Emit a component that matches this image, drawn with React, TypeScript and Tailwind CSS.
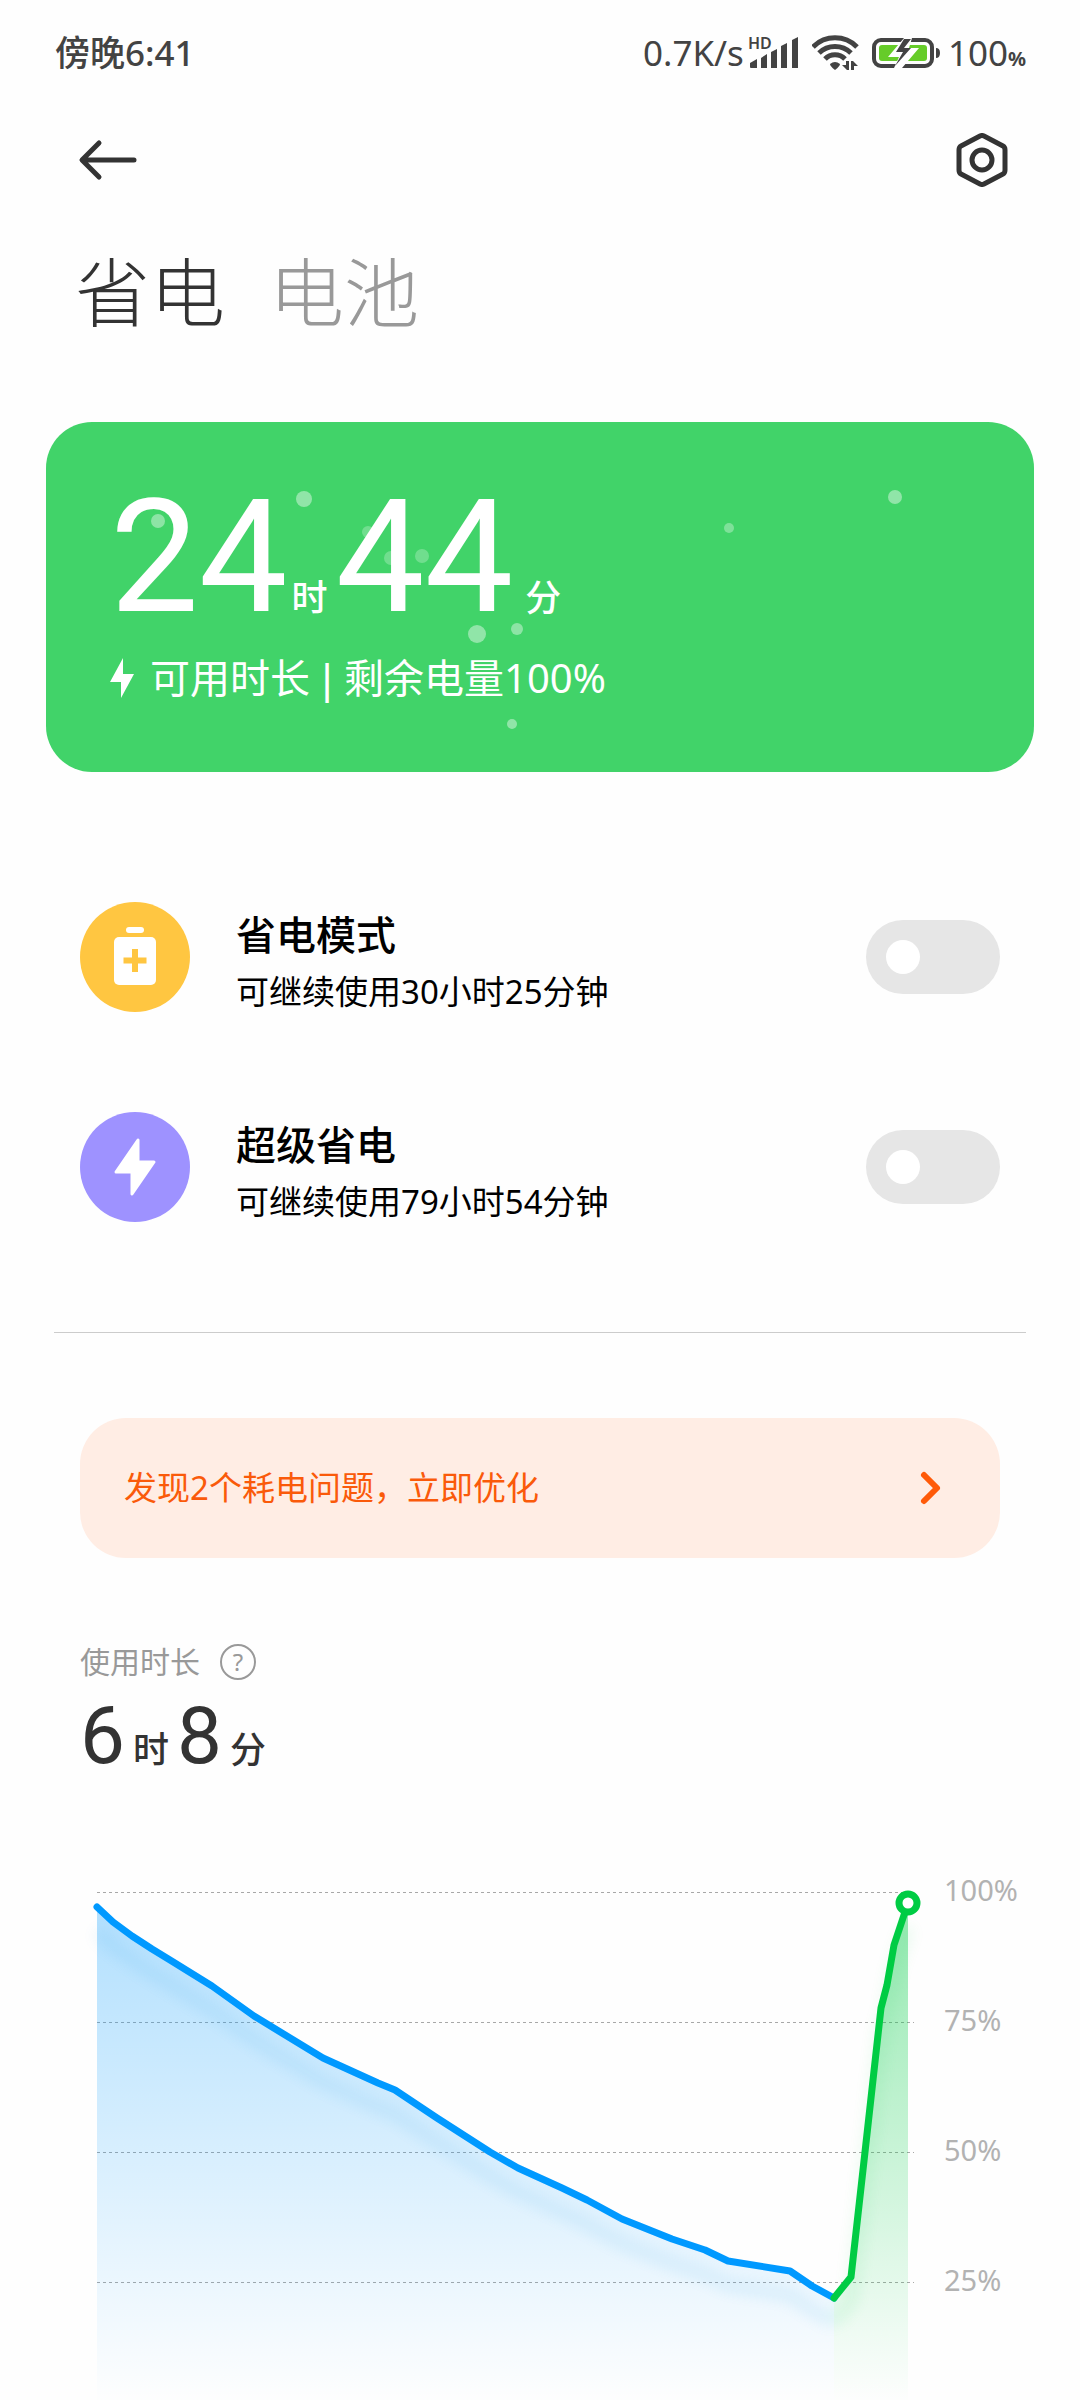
import { useState, type ReactNode } from "react";

type Point = [number, number];

const drain: Point[] = [
  [97, 47], [113, 62], [132, 76], [152, 89], [170, 100], [212, 126], [254, 156],
  [323, 198], [378, 223], [395, 230], [437, 258], [490, 292], [518, 308],
  [562, 328], [587, 340], [622, 359], [672, 379], [705, 390], [728, 401],
  [790, 411], [812, 426], [834, 438],
];

const charge: Point[] = [
  [834, 438], [851, 417], [865, 292], [881, 148], [887, 125], [894, 85], [908, 43],
];

const gridLines = [
  { y: 32, label: "100%" },
  { y: 162, label: "75%" },
  { y: 292, label: "50%" },
  { y: 422, label: "25%" },
  { y: 552, label: "0%" },
];

const bubbles = [
  { cx: 258, cy: 77, r: 8, o: 0.42 },
  { cx: 112, cy: 99, r: 7, o: 0.4 },
  { cx: 322, cy: 110, r: 6, o: 0.25 },
  { cx: 345, cy: 136, r: 7, o: 0.25 },
  { cx: 376, cy: 134, r: 7, o: 0.25 },
  { cx: 431, cy: 212, r: 9, o: 0.42 },
  { cx: 471, cy: 207, r: 6, o: 0.4 },
  { cx: 466, cy: 302, r: 5, o: 0.42 },
  { cx: 683, cy: 106, r: 5, o: 0.32 },
  { cx: 849, cy: 75, r: 7, o: 0.42 },
];

const toPath = (points: Point[]) => "M" + points.map((p) => p.join(" ")).join("L");

const toArea = (points: Point[]) =>
  `${toPath(points)}V552H${points[0][0]}Z`;

function StatusBar() {
  return (
    <header className="flex h-[106px] items-center justify-between pr-[54px] pl-[55px] text-[35px] text-[#434343]">
      <span className="font-medium">傍晚6:41</span>
      <div className="flex items-center">
        <span>0.7K/s</span>
        <svg viewBox="0 0 52 44" className="ml-1 h-11 w-[52px]" fill="currentColor" aria-label="HD 信号">
          <text x="0" y="18" fontSize="16" fontWeight="600">HD</text>
          <path d="M2 36v-4l7-4v9H3a1 1 0 0 1-1-1ZM13 27l6-4v14h-6ZM23 21l6-3v19h-6ZM33 15l6-3v25h-6ZM44 9l6-3v31h-6Z" />
        </svg>
        <svg viewBox="0 0 48 36" className="ml-3 h-9 w-12" aria-label="无线网络">
          <g fill="none" stroke="currentColor" strokeWidth="5">
            <path d="M1 12a31 31 0 0 1 44 0" />
            <path d="M7 18a23 23 0 0 1 32 0" />
            <path d="M13 24a14 14 0 0 1 20 0" />
          </g>
          <path d="M18 29a8 8 0 0 1 10 0q0 2-5 6-5-4-5-6Z" fill="currentColor" />
          <path d="M34 26h3v9h-2l-5-5h4ZM42 35h-3v-9h2l5 5h-4Z" fill="currentColor" />
        </svg>
        <svg viewBox="0 0 68 30" className="ml-3 h-[30px] w-[68px]" aria-label="正在充电">
          <rect x="2" y="2" width="58" height="26" rx="7" fill="none" stroke="currentColor" strokeWidth="4" />
          <rect x="7" y="7" width="48" height="16" rx="3" fill="#66cc29" />
          <path d="M64 10q4 0 4 5t-4 5Z" fill="currentColor" />
          <path d="M32 0 16 19h11l-5 11h8l17-20H37l3-10Z" fill="#fff" />
          <path d="m32 1-8 13h7l-8 14 16-18h-7l7-9Z" fill="currentColor" />
        </svg>
        <span className="ml-2">
          100<span className="text-[20px] font-bold">%</span>
        </span>
      </div>
    </header>
  );
}

function TopBar() {
  return (
    <div className="flex h-[108px] items-center justify-between px-[71px]">
      <button type="button" aria-label="返回">
        <svg viewBox="0 0 72 48" className="h-12 w-[72px]" fill="none" stroke="#333" strokeWidth="5" strokeLinecap="round" strokeLinejoin="round">
          <path d="M63 24H12M28 7 11 24l17 17" />
        </svg>
      </button>
      <button type="button" aria-label="设置">
        <svg viewBox="0 0 54 54" className="h-[54px] w-[54px]" fill="none" stroke="#333" strokeWidth="5" strokeLinejoin="round">
          <path d="M25 3q2-1 4 0l19 10q2 1 2 4v20q0 3-2 4L29 51q-2 1-4 0L6 41q-2-1-2-4V17q0-3 2-4Z" />
          <circle cx="27" cy="27" r="10" />
        </svg>
      </button>
    </div>
  );
}

function SummaryCard() {
  return (
    <section className="relative mx-[46px] mt-[70px] overflow-hidden rounded-[46px] bg-[#41d369] pt-[60px] pb-[64px] pl-[64px] text-white">
      <svg viewBox="0 0 988 350" className="absolute inset-0 h-full w-full" aria-hidden="true">
        {bubbles.map((b) => (
          <circle key={`${b.cx}-${b.cy}`} cx={b.cx} cy={b.cy} r={b.r} fill="#fff" opacity={b.o} />
        ))}
      </svg>
      <div className="relative flex items-baseline text-[36px] leading-none font-medium">
        <span className="font-['Roboto',sans-serif] text-[158px] leading-[150px] font-normal">24</span>
        <span className="mr-2 ml-1">时</span>
        <span className="font-['Roboto',sans-serif] text-[158px] leading-[150px] font-normal">44</span>
        <span className="ml-3">分</span>
      </div>
      <div className="relative mt-4 flex items-center text-[40px] leading-[60px]">
        <svg viewBox="0 0 24 40" className="mr-4 h-10 w-6" fill="#fff" aria-hidden="true">
          <path d="M13 0v16h11L11 40V24H0Z" />
        </svg>
        <p className="flex gap-1.5">
          <span>可用时长</span>
          <span className="font-medium">|</span>
          <span>剩余电量100%</span>
        </p>
      </div>
    </section>
  );
}

function ModeRow({
  id,
  icon,
  title,
  detail,
}: {
  id: string;
  icon: ReactNode;
  title: string;
  detail: string;
}) {
  const [on, setOn] = useState(false);
  return (
    <div className="flex h-[210px] items-center px-20">
      {icon}
      <label htmlFor={id} className="ml-[46px] flex-1 pt-2 text-black">
        <span className="block text-[40px] leading-[60px] font-medium">{title}</span>
        <span className="mt-0.5 block text-[33px] leading-[50px]">{detail}</span>
      </label>
      <input
        id={id}
        type="checkbox"
        role="switch"
        checked={on}
        onChange={(e) => setOn(e.target.checked)}
        className="h-[74px] w-[134px] appearance-none rounded-full bg-[#e6e6e6] p-5 before:block before:h-[34px] before:w-[34px] before:rounded-full before:bg-white checked:bg-[#41d369] checked:before:ml-auto"
      />
    </div>
  );
}

function UsageChart() {
  return (
    <svg viewBox="0 0 1080 580" className="block w-full" role="img" aria-label="电量曲线">
      <defs>
        <linearGradient id="drain-fill" gradientUnits="userSpaceOnUse" x1="0" y1="47" x2="0" y2="545">
          <stop offset="0" stopColor="#0099ff" stopOpacity="0.3" />
          <stop offset="1" stopColor="#0099ff" stopOpacity="0" />
        </linearGradient>
        <linearGradient id="charge-fill" gradientUnits="userSpaceOnUse" x1="0" y1="43" x2="0" y2="545">
          <stop offset="0" stopColor="#00cc44" stopOpacity="0.42" />
          <stop offset="1" stopColor="#00cc44" stopOpacity="0" />
        </linearGradient>
        <filter id="soft" x="-10%" y="-10%" width="120%" height="120%">
          <feGaussianBlur stdDeviation="7" />
        </filter>
      </defs>
      {gridLines.map((g) => (
        <g key={g.label}>
          <path d={`M97 ${g.y + 0.5}H914`} stroke="#a8a8a8" strokeDasharray="3 3" />
          <text x="944" y={g.y + 9} fontSize="29" fill="#b2b2b2">
            {g.label}
          </text>
        </g>
      ))}
      <path d={toArea(drain)} fill="url(#drain-fill)" />
      <path d={toArea(charge)} fill="url(#charge-fill)" />
      <g fill="none" strokeWidth="14" opacity="0.08" filter="url(#soft)" transform="translate(0 24)">
        <path d={toPath(drain)} stroke="#0088dd" />
        <path d={toPath(charge)} stroke="#00cc44" />
      </g>
      <g fill="none" strokeWidth="7" strokeLinejoin="round" strokeLinecap="round">
        <path d={toPath(drain)} stroke="#0099ff" />
        <path d={toPath(charge)} stroke="#00cc44" />
      </g>
      <circle cx="908" cy="43" r="9" fill="#fff" stroke="#00cc44" strokeWidth="7" />
    </svg>
  );
}

export default function App() {
  return (
    <main
      lang="zh-CN"
      className="h-screen overflow-y-auto bg-[#fefefe] font-['Noto_Sans','Noto_Sans_CJK_SC',sans-serif] text-[#333] [scrollbar-width:none]"
    >
      <StatusBar />
      <TopBar />
      <nav className="mt-[18px] flex gap-11 px-[75px] text-[75px] leading-[120px] font-light">
        <button type="button">省电</button>
        <button type="button" className="text-[#999]">电池</button>
      </nav>

      <SummaryCard />

      <section className="mt-20">
        <ModeRow
          id="saver"
          title="省电模式"
          detail="可继续使用30小时25分钟"
          icon={
            <svg viewBox="0 0 110 110" className="h-[110px] w-[110px]" aria-hidden="true">
              <circle cx="55" cy="55" r="55" fill="#ffc641" />
              <rect x="46" y="25" width="18" height="6" rx="3" fill="#fff" />
              <rect x="34" y="35" width="42" height="48" rx="5" fill="#fff" />
              <path d="M55 47v23M43.500 58.500h23" stroke="#ffc641" strokeWidth="6" />
            </svg>
          }
        />
        <ModeRow
          id="ultra"
          title="超级省电"
          detail="可继续使用79小时54分钟"
          icon={
            <svg viewBox="0 0 110 110" className="h-[110px] w-[110px]" aria-hidden="true">
              <circle cx="55" cy="55" r="55" fill="#9e92ff" />
              <path d="M58 28v22h16L52 82V60H36Z" fill="#fff" stroke="#fff" strokeWidth="3" strokeLinejoin="round" />
            </svg>
          }
        />
      </section>

      <hr className="mx-[54px] mt-[60px] border-[#ccc]" />

      <button
        type="button"
        className="mx-20 mt-[85px] flex h-[140px] w-[calc(100%-160px)] items-center justify-between rounded-[46px] bg-[#ffede4] pr-[58px] pl-[44px] text-[33px] text-[#fa5a0a]"
      >
        发现2个耗电问题，立即优化
        <svg viewBox="0 0 24 36" className="h-9 w-6" fill="none" stroke="#ff5a08" strokeWidth="6" strokeLinecap="round" strokeLinejoin="round" aria-hidden="true">
          <path d="m6 5 13 13L6 31" />
        </svg>
      </button>

      <section className="mt-[80px]">
        <div className="flex items-center px-20 text-[30px] leading-[48px] text-[#999]">
          <h2>使用时长</h2>
          <button type="button" aria-label="说明" className="ml-5 flex h-9 w-9 items-center justify-center rounded-full border-2 border-[#999] text-[24px]">
            ?
          </button>
        </div>
        <p className="flex items-baseline px-20 text-[36px] leading-none font-medium">
          <span className="font-['Roboto',sans-serif] text-[80px] leading-[100px] font-normal">6</span>
          <span className="mx-2">时</span>
          <span className="font-['Roboto',sans-serif] text-[80px] leading-[100px] font-normal">8</span>
          <span className="mx-2">分</span>
        </p>
        <div className="mt-[74px]">
          <UsageChart />
        </div>
      </section>
    </main>
  );
}
